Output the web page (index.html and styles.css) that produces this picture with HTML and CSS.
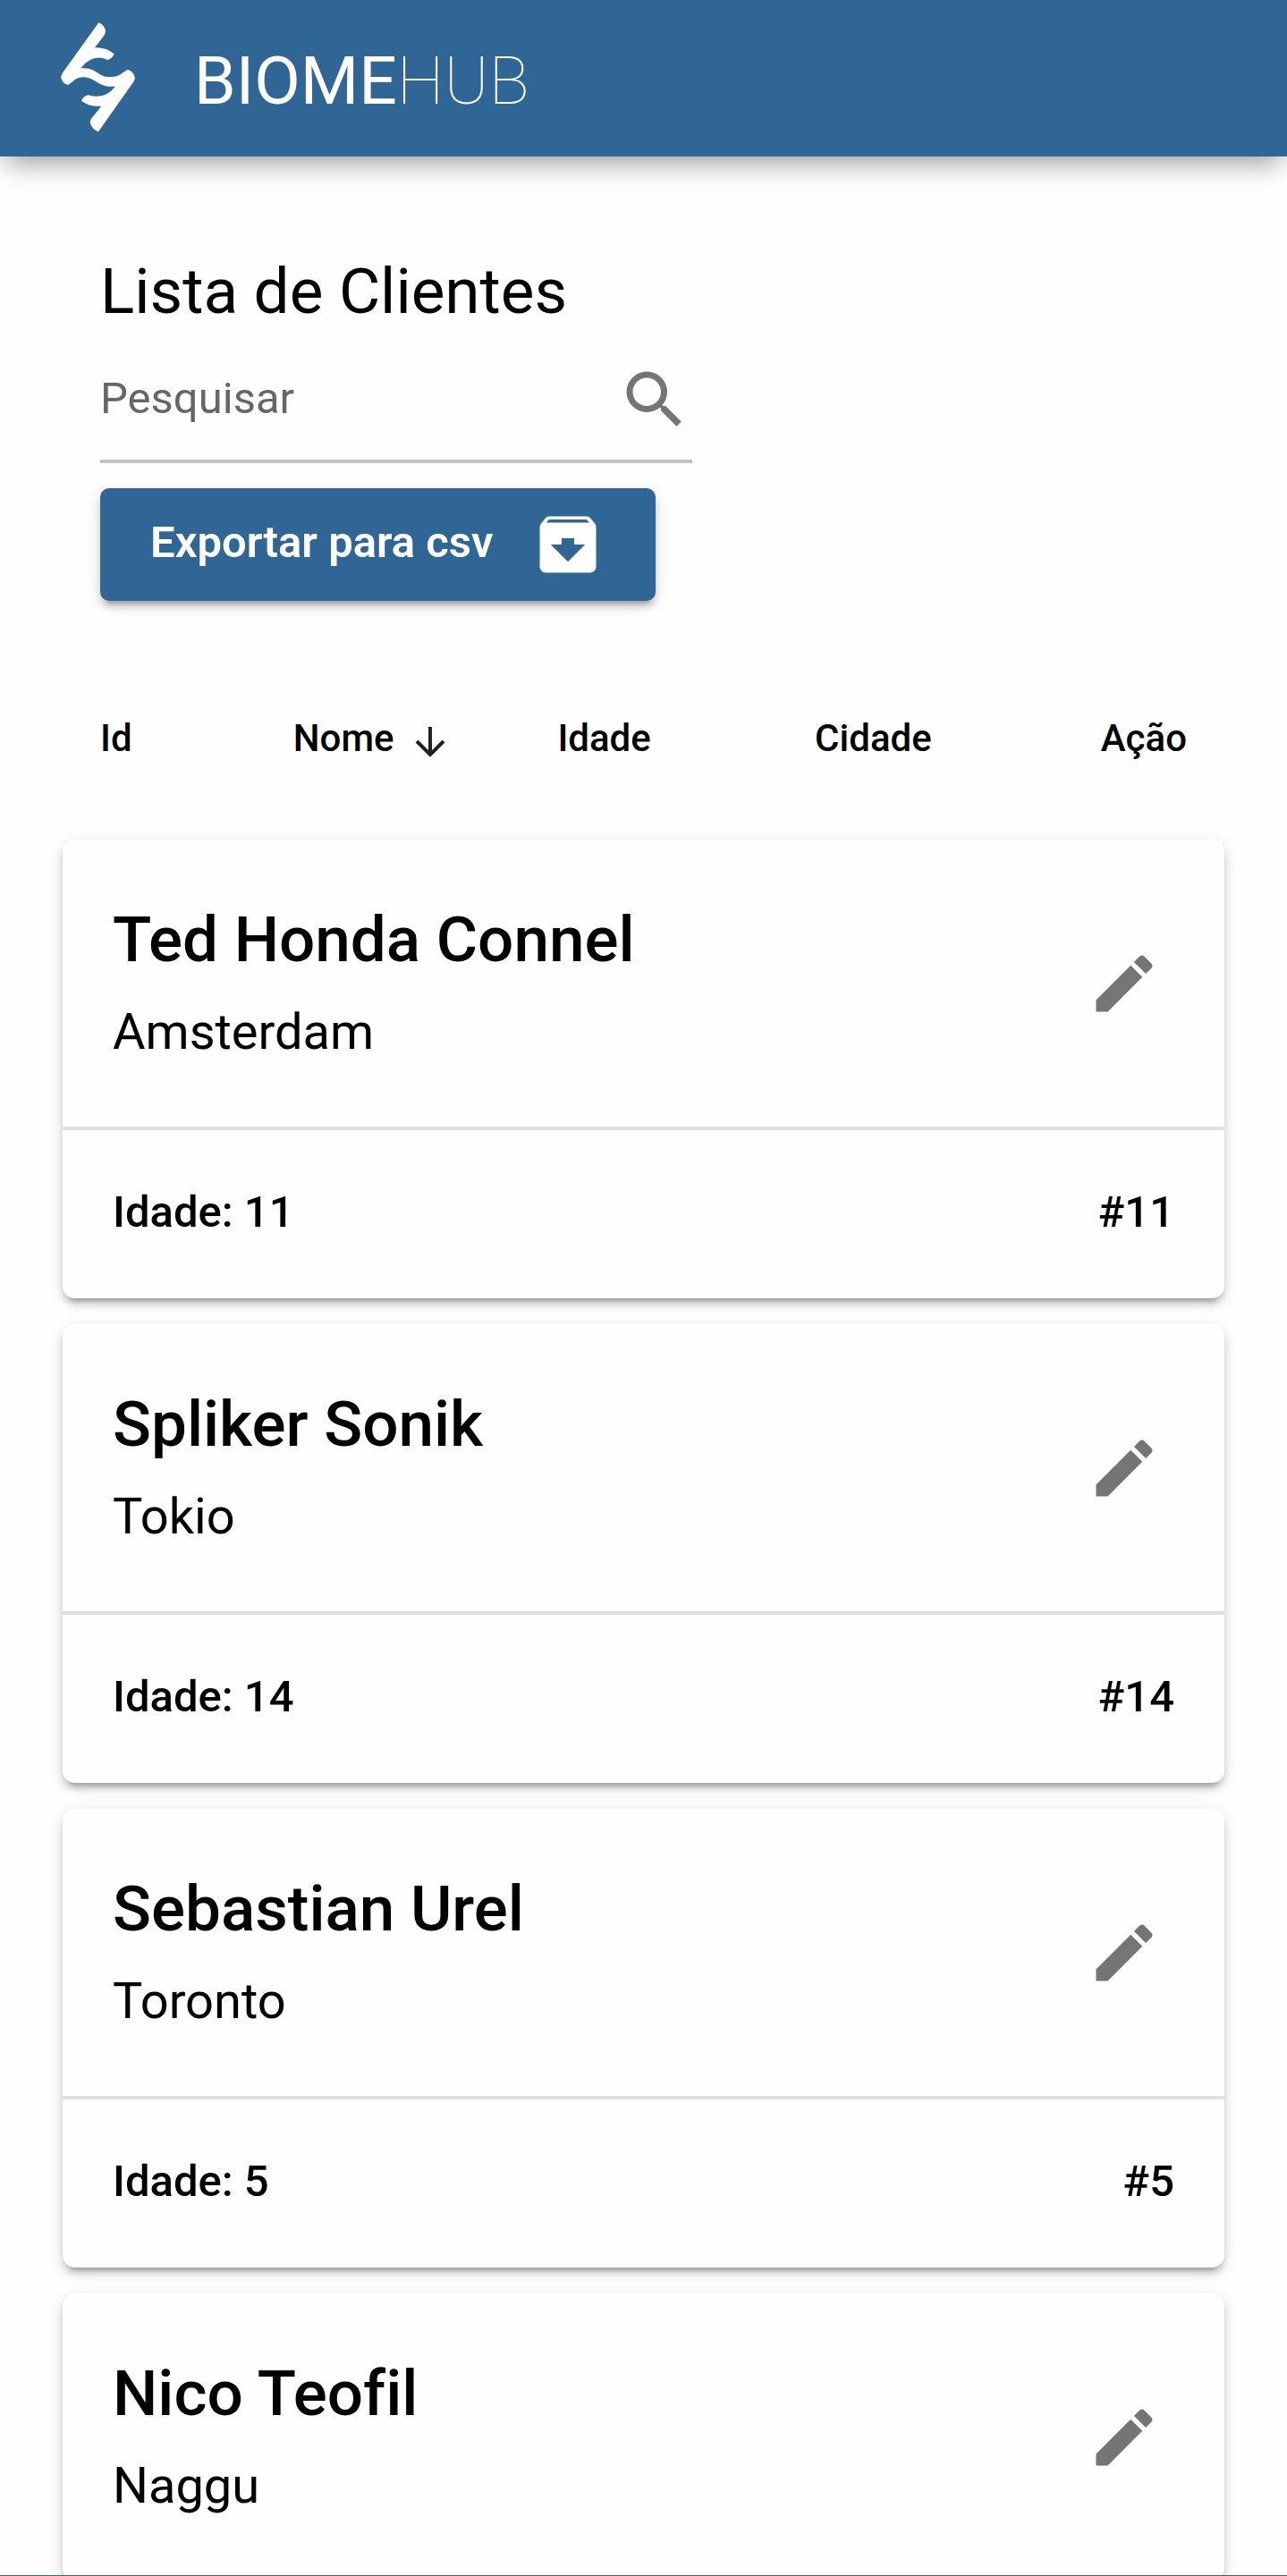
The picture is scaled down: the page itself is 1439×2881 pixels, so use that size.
FILE: index.html
```html
<!DOCTYPE html>
<html lang="pt-BR">
<head>
<meta charset="utf-8">
<meta name="viewport" content="width=device-width, initial-scale=1">
<title>BiomeHub - Lista de Clientes</title>
<link rel="stylesheet" href="styles.css">
</head>
<body>
<svg class="sprite" aria-hidden="true">
  <symbol id="pencil" viewBox="0 0 24 24"><path d="M20.71 7.04c.39-.39.39-1.04 0-1.41l-2.34-2.34c-.37-.39-1.02-.39-1.41 0l-1.84 1.83 3.75 3.75M3 17.25V21h3.75L17.81 9.93l-3.75-3.75L3 17.25z"/></symbol>
</svg>

<header class="app-bar">
  <svg class="logo" viewBox="0 -30 360 525" role="img" aria-label="Logo BiomeHub">
    <path d="M181 46Q202 54 204 76L201 86L168 130Q206 128 233 151Q227 166 211 171Q160 148 121 199Q152 197 174 212C192 224 202 229 220 228Q248 228 262 214L278 203Q300 210 303 232L299 243L180 412Q157 403 152 380L155 370L190 326Q152 330 123 308Q130 292 147 289Q200 306 237 260Q205 263 179 248C162 238 150 230 132 229Q106 228 90 247L77 255Q57 248 54 228L59 216Z"/>
  </svg>
  <div class="brand">BIOME<span class="brand-thin">HUB</span></div>
</header>

<main class="content">
  <section class="toolbar">
    <h1 class="title">Lista de Clientes</h1>
    <label class="search">
      <input class="search-input" type="text" placeholder="Pesquisar" aria-label="Pesquisar">
      <svg class="icon" viewBox="0 0 24 24" aria-hidden="true"><path d="M15.5 14h-.79l-.28-.27A6.471 6.471 0 0 0 16 9.5 6.5 6.5 0 1 0 9.5 16c1.61 0 3.09-.59 4.23-1.57l.27.28v.79l5 4.99L20.49 19l-4.99-5zm-6 0C7.01 14 5 11.99 5 9.5S7.01 5 9.5 5 14 7.01 14 9.5 11.99 14 9.5 14z"/></svg>
    </label>
    <button class="export" type="button">
      <span class="export-label">Exportar para csv</span>
      <svg class="icon" viewBox="0 0 24 24" aria-hidden="true"><path d="M20.54 5.23l-1.39-1.68C18.88 3.21 18.47 3 18 3H6c-.47 0-.88.21-1.16.55L3.46 5.23C3.17 5.57 3 6.02 3 6.5V19c0 1.1.9 2 2 2h14c1.1 0 2-.9 2-2V6.5c0-.48-.17-.93-.46-1.27zM12 17.5L6.5 12H10v-2h4v2h3.5L12 17.5zM5.12 5l.81-1h12l.94 1H5.12z"/></svg>
    </button>
  </section>

  <div class="sort-bar">
    <button class="sort" type="button">Id</button>
    <button class="sort" type="button">Nome
      <svg class="sort-arrow" viewBox="0 0 34 34" aria-hidden="true"><path d="M17 0V31M2 16L17 31L32 16"/></svg>
    </button>
    <button class="sort" type="button">Idade</button>
    <button class="sort" type="button">Cidade</button>
    <span class="sort">Ação</span>
  </div>

  <ul class="cards">
    <li class="card">
      <div class="card-main">
        <div class="client"><h2 class="name">Ted Honda Connel</h2><p class="city">Amsterdam</p></div>
        <button class="edit" type="button" aria-label="Editar"><svg class="icon"><use href="#pencil"/></svg></button>
      </div>
      <div class="card-foot"><span>Idade: 11</span><span>#11</span></div>
    </li>
    <li class="card">
      <div class="card-main">
        <div class="client"><h2 class="name">Spliker Sonik</h2><p class="city">Tokio</p></div>
        <button class="edit" type="button" aria-label="Editar"><svg class="icon"><use href="#pencil"/></svg></button>
      </div>
      <div class="card-foot"><span>Idade: 14</span><span>#14</span></div>
    </li>
    <li class="card">
      <div class="card-main">
        <div class="client"><h2 class="name">Sebastian Urel</h2><p class="city">Toronto</p></div>
        <button class="edit" type="button" aria-label="Editar"><svg class="icon"><use href="#pencil"/></svg></button>
      </div>
      <div class="card-foot"><span>Idade: 5</span><span>#5</span></div>
    </li>
    <li class="card">
      <div class="card-main">
        <div class="client"><h2 class="name">Nico Teofil</h2><p class="city">Naggu</p></div>
        <button class="edit" type="button" aria-label="Editar"><svg class="icon"><use href="#pencil"/></svg></button>
      </div>
    </li>
  </ul>
</main>
</body>
</html>
```
FILE: styles.css
```css
* { box-sizing: border-box; }

body {
  margin: 0;
  height: 100vh;
  display: flex;
  flex-direction: column;
  overflow: hidden;
  background: #fefefe;
  border-bottom: 1px solid #2f6695;
  color: #000;
  font-family: Roboto, "Liberation Sans", sans-serif;
  font-variant-ligatures: none;
}

h1, h2, p, ul { margin: 0; padding: 0; }

button {
  border: 0;
  padding: 0;
  background: none;
  color: inherit;
  font: inherit;
  cursor: pointer;
}

.sprite { display: none; }

.icon {
  display: block;
  flex: none;
  width: 84px;
  height: 84px;
  fill: currentColor;
}

/* App bar */
.app-bar {
  position: relative;
  z-index: 1;
  flex: none;
  display: flex;
  align-items: center;
  gap: 47px;
  height: 175px;
  padding: 0 50px;
  background: #2f6695;
  color: #fff;
  box-shadow: 0 14px 28px -7px rgba(0, 0, 0, .4);
}

.logo { width: 120px; height: 175px; fill: #fff; }

.brand {
  padding-top: 4px;
  font-size: 75px;
  line-height: 84px;
  font-weight: 400;
}
.brand-thin { font-weight: 100; }

/* Page content */
.content {
  flex: 1;
  min-height: 0;
  padding: 109px 70px 0;
  overflow-y: auto;
  scrollbar-width: none;
}

.toolbar {
  display: flex;
  flex-direction: column;
  align-items: flex-start;
  padding: 0 42px;
}

.title { font-size: 71px; line-height: 84px; font-weight: 400; }

.search {
  display: flex;
  align-items: center;
  width: 662px;
  max-width: 100%;
  height: 138px;
  margin-top: 12px;
  border-bottom: 4px solid #c2c2c2;
  color: #757575;
}

.search-input {
  flex: 1;
  min-width: 0;
  padding: 0 0 4px;
  border: 0;
  outline: 0;
  background: none;
  color: #000;
  font: inherit;
  font-size: 49px;
}

.search-input::placeholder { color: #666; opacity: 1; }

.export {
  display: flex;
  align-items: center;
  gap: 41px;
  height: 126px;
  margin-top: 28px;
  padding: 0 56px;
  border-radius: 10px;
  background: #2f6695;
  color: #fff;
  font-size: 49px;
  font-weight: 600;
  box-shadow: 0 10px 4px -7px rgba(0, 0, 0, .2), 0 7px 7px rgba(0, 0, 0, .14), 0 4px 18px rgba(0, 0, 0, .12);
}

.export-label { padding-bottom: 6px; }

.sort-bar {
  display: grid;
  grid-template-columns: 27fr 37fr 36fr 40fr 12fr;
  padding: 126px 42px 85px;
}

.sort {
  display: flex;
  align-items: center;
  gap: 24px;
  font-size: 42px;
  line-height: 56px;
  font-weight: 500;
}

.sort-arrow {
  width: 34px;
  height: 34px;
  margin-top: 8px;
  fill: none;
  stroke: #212121;
  stroke-width: 4;
}

/* Client cards */
.cards {
  display: flex;
  flex-direction: column;
  gap: 29px;
  list-style: none;
}

.card {
  border-radius: 14px;
  background: #fefefe;
  box-shadow: 0 10px 4px -7px rgba(0, 0, 0, .2), 0 7px 7px rgba(0, 0, 0, .14), 0 4px 18px rgba(0, 0, 0, .12);
}

.card-main {
  display: flex;
  align-items: center;
  justify-content: space-between;
  padding: 0 70px 0 56px;
}

.client { padding: 70px 0 64px; }
.name { font-size: 71px; line-height: 84px; font-weight: 500; }
.city { margin-top: 19px; font-size: 56px; line-height: 84px; }
.edit { color: #757575; }

.card-foot {
  display: flex;
  justify-content: space-between;
  padding: 57px 56px 61px;
  border-top: 4px solid #e0e0e0;
  font-size: 49px;
  line-height: 70px;
  font-weight: 500;
}
```
